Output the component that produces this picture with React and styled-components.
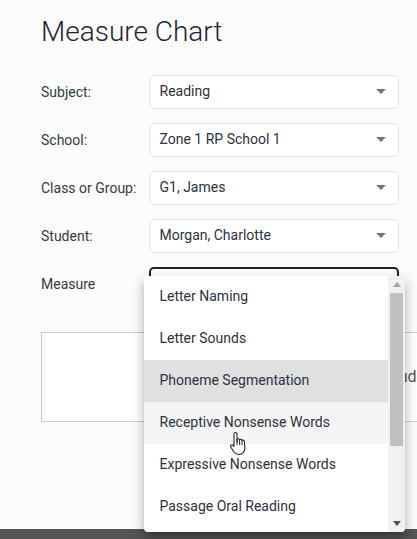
import React from "react";
import styled, { createGlobalStyle } from "styled-components";

const GlobalStyle = createGlobalStyle`
  html, body {
    margin: 0;
    height: 100%;
    overflow: hidden;
    background: #fcfcfc;
  }
`;

const Page = styled.div`
  display: flex;
  flex-direction: column;
  width: 417px;
  height: 539px;
  overflow: hidden;
  font-family: Roboto, "Liberation Sans", sans-serif;
  font-size: 14px;
  color: #2b3240;
`;

const Main = styled.main`
  flex: 1;
  min-height: 0;
  padding: 15px 18px 0 41px;
`;

const Title = styled.h1`
  margin: 0 0 26px;
  font-size: 28px;
  line-height: 34px;
  font-weight: 300;
  color: #1d2636;
`;

const Form = styled.div`
  display: flex;
  flex-direction: column;
  gap: 14px;
`;

const Row = styled.div`
  display: grid;
  grid-template-columns: 108px 250px;
  align-items: ${(p) => (p.$top ? "start" : "center")};
`;

const Label = styled.label`
  line-height: 34px;
  color: #333a45;
`;

const Field = styled.div`
  position: relative;
`;

const Select = styled.div`
  display: flex;
  align-items: center;
  justify-content: space-between;
  box-sizing: border-box;
  height: 34px;
  padding: 0 8px 2px 9.5px;
  background: #fff;
  border: ${(p) => (p.$open ? "2px solid #222" : "1px solid #e3e3e3")};
  border-radius: 5px;
`;

const Caret = styled.svg`
  width: 24px;
  height: 24px;
  fill: #777;
  margin-right: -3px;
`;

const ChartBox = styled.div`
  display: flex;
  align-items: center;
  box-sizing: border-box;
  width: 500px;
  height: 90px;
  margin-top: 31px;
  padding: 0 0 2px 342px;
  background: #fff;
  border: 1px solid #ccc;
  color: #555;
  font-size: 16px;
`;

const Menu = styled.div`
  position: absolute;
  top: 9px;
  left: -5px;
  display: flex;
  width: 261px;
  height: 256px;
  background: #fff;
  border-radius: 4px;
  overflow: hidden;
  box-shadow: 0 5px 5px -3px rgba(0, 0, 0, 0.2), 0 8px 10px 1px rgba(0, 0, 0, 0.14),
    0 3px 14px 2px rgba(0, 0, 0, 0.12);
  z-index: 2;
`;

const MenuList = styled.ul`
  flex: 1;
  margin: 0;
  padding: 0;
  list-style: none;
`;

const MenuItem = styled.li`
  height: 42px;
  padding-left: 15.5px;
  line-height: 41px;
  background: ${(p) => (p.$selected ? "#e0e0e0" : p.$hover ? "#f5f5f5" : "transparent")};
`;

const Scrollbar = styled.div`
  display: flex;
  flex-direction: column;
  align-items: center;
  justify-content: space-between;
  width: 17px;
  background: #f1f1f1;
`;

const ScrollArrow = styled.div`
  display: flex;
  align-items: center;
  justify-content: center;
  height: 17px;
  color: ${(p) => p.$color};
`;

const ScrollThumb = styled.div`
  flex: 1;
  width: 13px;
  margin-bottom: 69px;
  background: #c1c1c1;
`;

const Pointer = styled.svg`
  position: absolute;
  top: 431px;
  left: 229px;
  width: 20px;
  height: 25px;
  z-index: 3;
`;

const Footer = styled.footer`
  flex: none;
  height: 10px;
  background: #555;
`;

const fields = [
  ["Subject:", "Reading"],
  ["School:", "Zone 1 RP School 1"],
  ["Class or Group:", "G1, James"],
  ["Student:", "Morgan, Charlotte"],
];

const measures = [
  "Letter Naming",
  "Letter Sounds",
  "Phoneme Segmentation",
  "Receptive Nonsense Words",
  "Expressive Nonsense Words",
  "Passage Oral Reading",
];

const App = () => {
  return (
    <Page>
      <GlobalStyle />
      <Main>
        <Title>Measure Chart</Title>
        <Form>
          {fields.map(([label, value]) => (
            <Row key={label}>
              <Label>{label}</Label>
              <Select>
                {value}
                <Caret viewBox="0 0 24 24">
                  <path d="M7 10l5 5 5-5z" />
                </Caret>
              </Select>
            </Row>
          ))}
          <Row $top>
            <Label>Measure</Label>
            <Field>
              <Select $open />
              <Menu>
                <MenuList>
                  {measures.map((m, i) => (
                    <MenuItem key={m} $selected={i === 2} $hover={i === 3}>
                      {m}
                    </MenuItem>
                  ))}
                </MenuList>
                <Scrollbar>
                  <ScrollArrow $color="#a3a3a3">
                    <svg width="8" height="5" viewBox="0 0 8 5">
                      <path d="M4 0l4 5H0z" fill="currentColor" />
                    </svg>
                  </ScrollArrow>
                  <ScrollThumb />
                  <ScrollArrow $color="#505050">
                    <svg width="8" height="5" viewBox="0 0 8 5">
                      <path d="M0 0h8L4 5z" fill="currentColor" />
                    </svg>
                  </ScrollArrow>
                </Scrollbar>
              </Menu>
            </Field>
          </Row>
        </Form>
        <ChartBox>Student</ChartBox>
      </Main>
      <Footer />
      <Pointer viewBox="0 0 20 25">
        <path
          d="M6.500 1.500c.9 0 1.500.7 1.500 1.600V11l.3-3c1-.6 2-.3 2.300.6.900-.6 2-.3 2.400.7 1-.5 2-.1 2.300 1l.6 6.500c0 3.600-2.400 6.700-6 6.700-2.500 0-3.900-.9-5.200-2.700L1.800 16c-.5-.8-.3-1.700.4-2.100.8-.4 1.600-.1 2.200.7l.6.800V3.100c0-.9.700-1.600 1.500-1.600z"
          fill="#fff"
          stroke="#1c2430"
          strokeWidth="1.100"
          strokeLinejoin="round"
        />
        <path d="M8 8v6M10.600 8.600v5.400M13 9.300v4.700" stroke="#1c2430" strokeWidth="1" fill="none" />
      </Pointer>
    </Page>
  );
};

export default App;
